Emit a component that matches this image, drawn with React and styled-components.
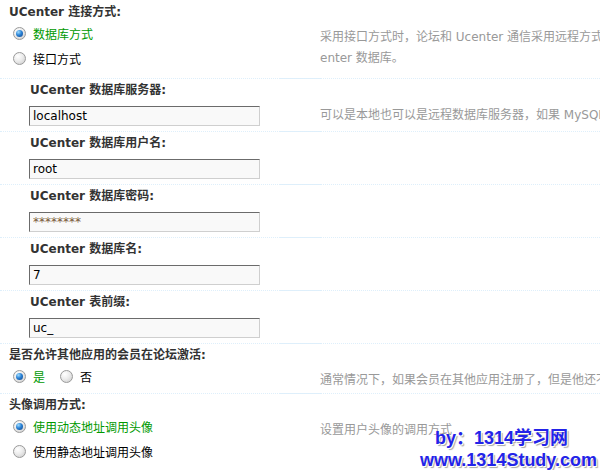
import React from 'react';
import styled, { createGlobalStyle } from 'styled-components';

const GlobalStyle = createGlobalStyle`
  html, body {
    margin: 0;
    padding: 0;
    background: #fff;
  }
  body {
    width: 600px;
    height: 470px;
    overflow: hidden;
    font: 12px "DejaVu Sans", "Noto Sans CJK SC", sans-serif;
    color: #000;
  }
`;

const Page = styled.div`
  position: relative;
  width: 600px;
  height: 470px;
  overflow: hidden;
`;

const Section = styled.div`
  position: relative;
  border-top: 1px dotted ${({ $first }) => ($first ? 'transparent' : '#deeffb')};

  &::before {
    content: '';
    position: absolute;
    left: 280px;
    top: -1px;
    width: 41px;
    height: 1px;
    background: ${({ $first }) => ($first ? 'transparent' : '#deeffb')};
  }
`;

const Label = styled.div`
  height: 22px;
  line-height: 22px;
  padding-left: ${({ $sub }) => ($sub ? '30px' : '9px')};
  font-weight: bold;
  color: #333;
  white-space: nowrap;
`;

const Body = styled.div`
  display: flex;
`;

const FormCell = styled.div`
  flex: none;
  width: 320px;
  box-sizing: border-box;
  padding: ${({ $sub }) => ($sub ? '5px 0 5px 29px' : '0')};
`;

const Tip = styled.div`
  flex: 1;
  min-width: 0;
  padding-top: 4px;
  line-height: 21px;
  color: #999;
  white-space: nowrap;
`;

const TextInput = styled.input`
  display: block;
  width: 231px;
  height: 20px;
  box-sizing: border-box;
  margin: 0;
  padding: 0 3px;
  border: 1px solid;
  border-color: #6b6b6b #cfcfcf #cfcfcf #6b6b6b;
  background: #f9f9f9;
  font: 12px "DejaVu Sans", "Noto Sans CJK SC", sans-serif;
  color: ${({ $muted }) => ($muted ? '#7a5a3a' : '#000')};
  outline: none;
`;

const RadioList = styled.div`
  display: flex;
  flex-direction: ${({ $inline }) => ($inline ? 'row' : 'column')};
  margin-top: -2px;
  padding: 0 0 ${({ $inline }) => ($inline ? '4px' : '7px')} 13px;
`;

const RadioItem = styled.label`
  display: flex;
  align-items: center;
  height: 25px;
  margin-right: 15px;
  color: ${({ $checked }) => ($checked ? '#090' : '#000')};
  white-space: nowrap;
`;

const RadioDot = styled.span`
  position: relative;
  flex: none;
  width: 13px;
  height: 13px;
  margin-right: 7px;
  box-sizing: border-box;
  border-radius: 50%;
  border: 1px solid #9a9a9a;
  background: radial-gradient(circle at 35% 30%, #ffffff 0%, #ececec 45%, #c8c8c8 100%);

  &::after {
    content: '';
    display: ${({ $checked }) => ($checked ? 'block' : 'none')};
    position: absolute;
    left: 2px;
    top: 2px;
    width: 7px;
    height: 7px;
    border-radius: 50%;
    background: radial-gradient(circle at 35% 30%, #9fdcff 0%, #2b83d6 45%, #0c3f86 100%);
  }
`;

const Watermark = styled.div`
  position: absolute;
  left: ${({ $left }) => $left}px;
  top: ${({ $top }) => $top}px;
  font: bold 18px "Liberation Sans", "Noto Sans CJK SC", sans-serif;
  line-height: 18px;
  color: #2323e8;
  white-space: nowrap;
  text-shadow: 1px 1px 0 #fff, 2px 2px 1px #a8a8a8;
`;

const Radio = ({ checked, children }) => (
  <RadioItem $checked={checked}>
    <RadioDot $checked={checked} />
    {children}
  </RadioItem>
);

const fields = [
  {
    label: 'UCenter 数据库服务器:',
    value: 'localhost',
    tip: '可以是本地也可以是远程数据库服务器，如果 MySQL 端口不是默认的 3306，请填写如下形式：127.0.0.1:6033',
  },
  { label: 'UCenter 数据库用户名:', value: 'root' },
  { label: 'UCenter 数据库密码:', value: '********', muted: true },
  { label: 'UCenter 数据库名:', value: '7' },
  { label: 'UCenter 表前缀:', value: 'uc_' },
];

const App = () => {
  return (
    <Page>
      <GlobalStyle />

      <Section $first>
        <Label>UCenter 连接方式:</Label>
        <Body>
          <FormCell>
            <RadioList>
              <Radio checked>数据库方式</Radio>
              <Radio>接口方式</Radio>
            </RadioList>
          </FormCell>
          <Tip>
            采用接口方式时，论坛和 Ucenter 通信采用远程方式，如果您的 UCenter 和论坛不在同一台服务器上，请选择此方式；数据库方式需要论坛可以直接连接 UC
            <br />
            enter 数据库。
          </Tip>
        </Body>
      </Section>

      {fields.map((f) => (
        <Section key={f.label}>
          <Label $sub>{f.label}</Label>
          <Body>
            <FormCell $sub>
              <TextInput type="text" defaultValue={f.value} $muted={f.muted} />
            </FormCell>
            <Tip>{f.tip}</Tip>
          </Body>
        </Section>
      ))}

      <Section>
        <Label>是否允许其他应用的会员在论坛激活:</Label>
        <Body>
          <FormCell>
            <RadioList $inline>
              <Radio checked>是</Radio>
              <Radio>否</Radio>
            </RadioList>
          </FormCell>
          <Tip>通常情况下，如果会员在其他应用注册了，但是他还不能直接登录论坛，需要激活后才可以使用</Tip>
        </Body>
      </Section>

      <Section>
        <Label>头像调用方式:</Label>
        <Body>
          <FormCell>
            <RadioList>
              <Radio checked>使用动态地址调用头像</Radio>
              <Radio>使用静态地址调用头像</Radio>
            </RadioList>
          </FormCell>
          <Tip>设置用户头像的调用方式</Tip>
        </Body>
      </Section>

      <Watermark $left={435} $top={429}>by：1314学习网</Watermark>
      <Watermark $left={420} $top={451}>www.1314Study.com</Watermark>
    </Page>
  );
};

export default App;
